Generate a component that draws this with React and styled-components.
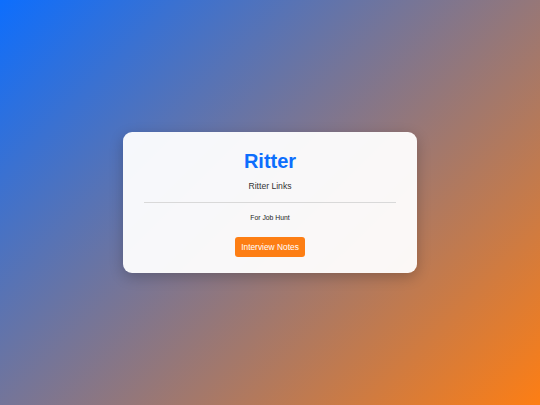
import React from "react";
import styled, { createGlobalStyle } from "styled-components";

const Global = createGlobalStyle`
  html, body { margin: 0; padding: 0; height: 100%; }
  body {
    font-family: "Liberation Sans", Arial, sans-serif;
    background: linear-gradient(135deg, #0d6efd 0%, #fd7e14 100%);
    background-attachment: fixed;
  }
  #root { height: 100%; }
`;

const Page = styled.div`
  width: 540px;
  height: 405px;
  display: flex;
  align-items: center;
  justify-content: center;
`;

const Card = styled.div`
  width: 294px;
  box-sizing: border-box;
  padding: 17.5px 21px 16.5px;
  background: rgba(255, 255, 255, 0.95);
  border-radius: 9px;
  box-shadow: 0 4px 14px rgba(0, 0, 0, 0.22);
  display: flex;
  flex-direction: column;
  align-items: center;
  text-align: center;
`;

const Title = styled.h1`
  margin: 0;
  font-size: 20px;
  line-height: 23px;
  font-weight: 700;
  color: #0d6efd;
`;

const Subtitle = styled.p`
  margin: 8.5px 0 0;
  font-size: 8.6px;
  line-height: 10px;
  color: #333;
`;

const Divider = styled.hr`
  align-self: stretch;
  margin: 11px 0 0;
  border: 0;
  border-top: 1px solid #d9d9d9;
`;

const Note = styled.p`
  margin: 10.5px 0 0;
  font-size: 6.8px;
  line-height: 8px;
  color: #222;
`;

const Button = styled.a`
  margin-top: 15.5px;
  display: inline-flex;
  align-items: center;
  justify-content: center;
  height: 19.5px;
  padding: 0 6.5px;
  border-radius: 3px;
  background: #fd7e14;
  color: #fff;
  font-size: 8.4px;
  text-decoration: none;
`;

export default function App() {
  return (
    <>
      <Global />
      <Page>
        <Card>
          <Title>Ritter</Title>
          <Subtitle>Ritter Links</Subtitle>
          <Divider />
          <Note>For Job Hunt</Note>
          <Button href="#">Interview Notes</Button>
        </Card>
      </Page>
    </>
  );
}
